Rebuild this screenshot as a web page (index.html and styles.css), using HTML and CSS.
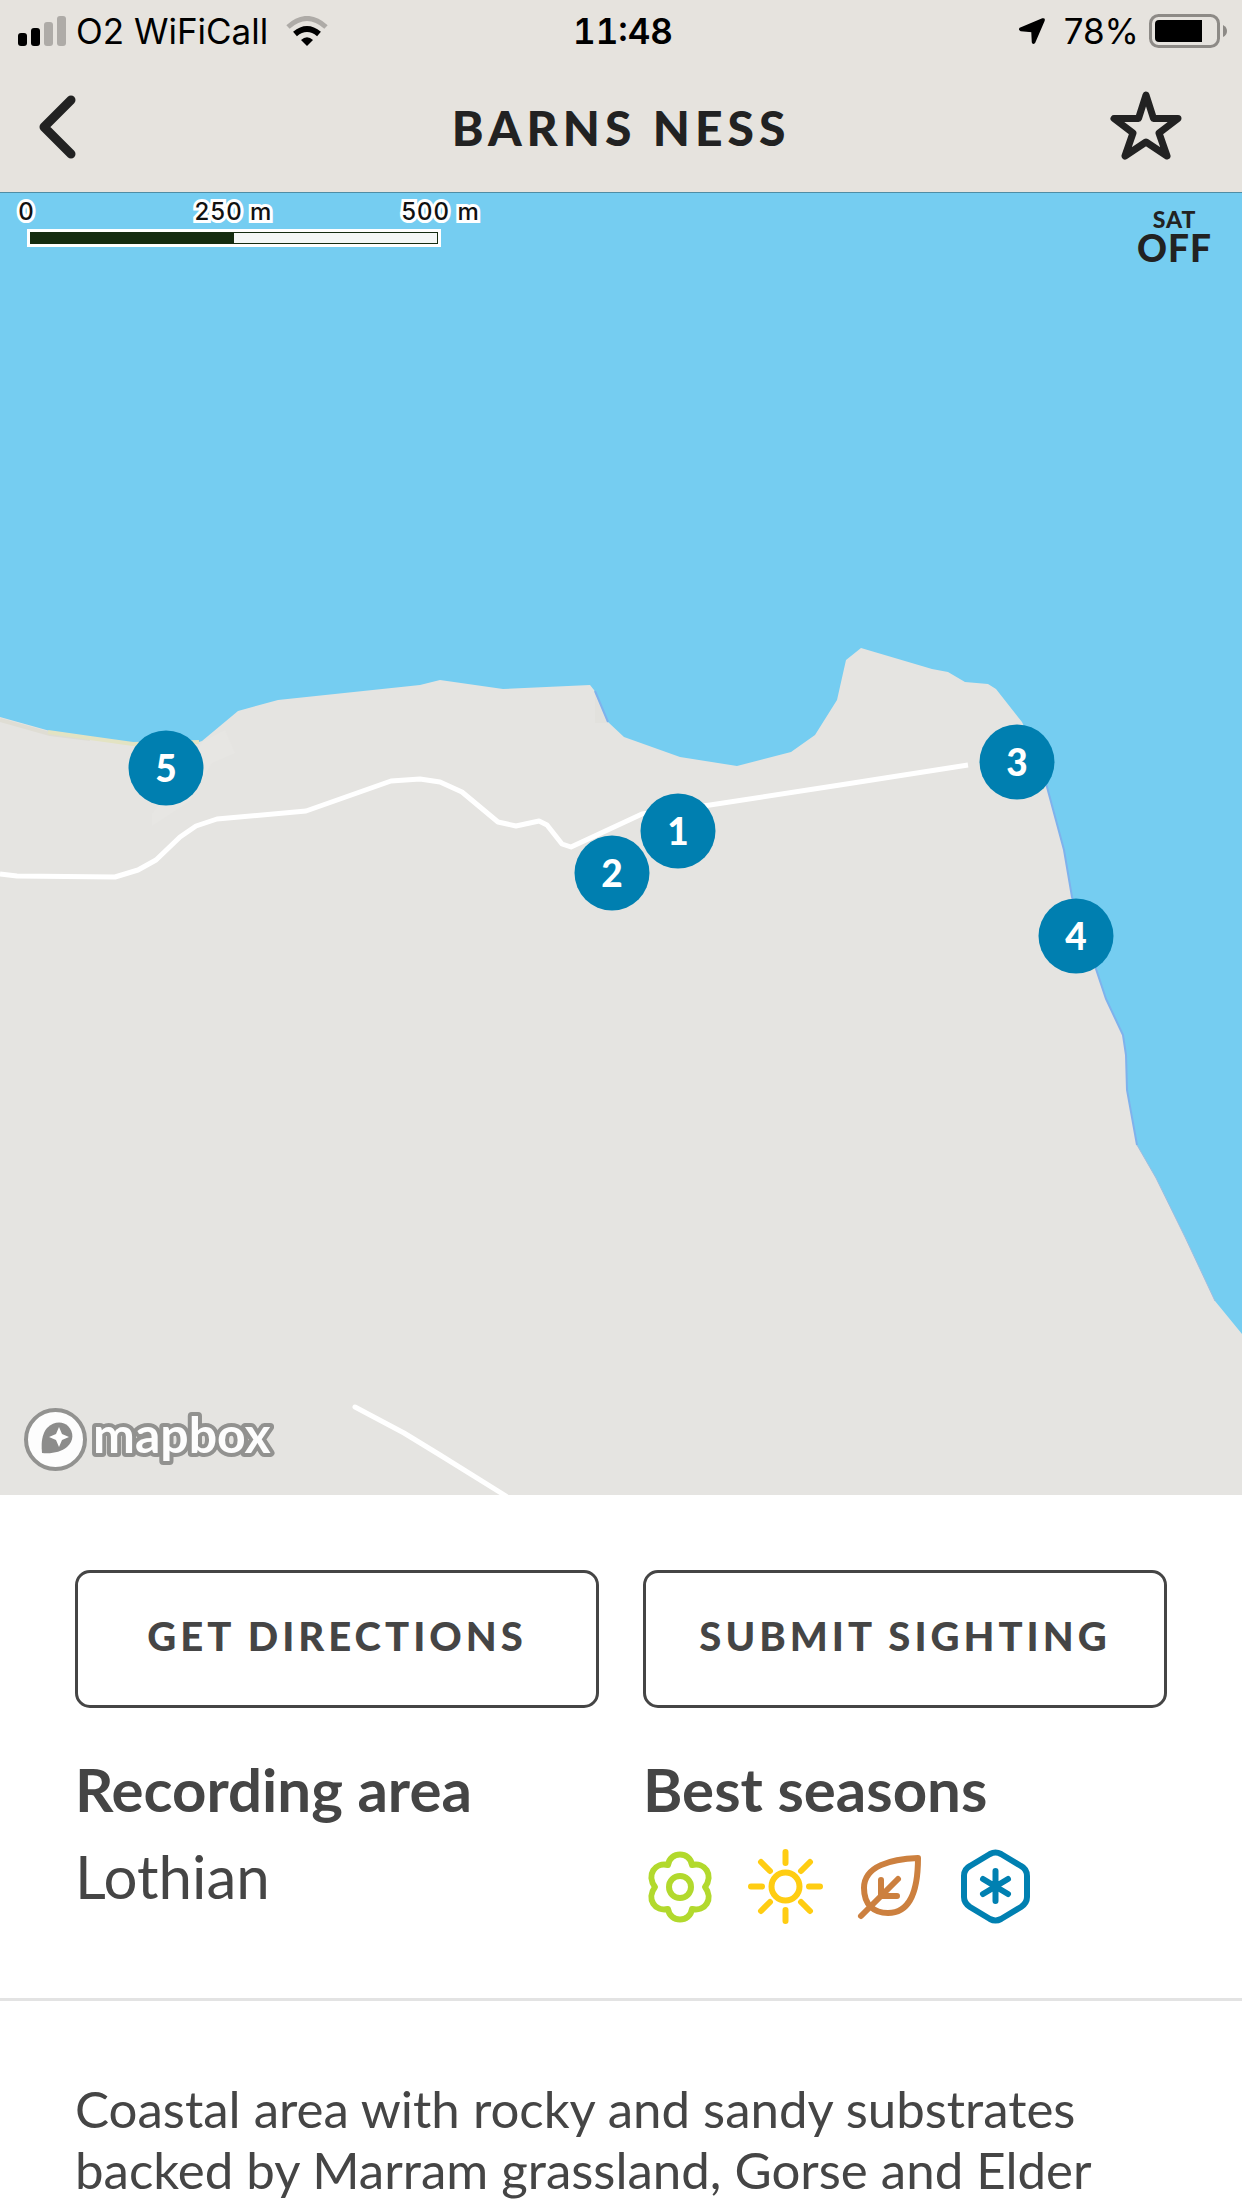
FILE: index.html
```html
<!DOCTYPE html>
<html lang="en">
<head>
  <meta charset="UTF-8">
  <meta name="viewport" content="width=device-width, initial-scale=1.0">
  <title>Barns Ness</title>
  <link rel="stylesheet" href="styles.css">
</head>
<body>
  <header class="top">
    <div class="status">
      <div class="status-left">
        <svg width="48" height="30" viewBox="0 0 48 30" aria-hidden="true">
          <rect x="0" y="17" width="9" height="13" rx="3"/>
          <rect x="13" y="12" width="9" height="18" rx="3"/>
          <rect x="26" y="6" width="9" height="24" rx="3" fill="#aeaba7"/>
          <rect x="39" y="0" width="9" height="30" rx="3" fill="#aeaba7"/>
        </svg>
        <span>O2 WiFiCall</span>
        <svg class="wifi" width="42" height="30" viewBox="0 0 42 30" fill="none" aria-hidden="true">
          <path d="M2 11Q21-6 40 11" stroke="#aeaba7" stroke-width="5"/>
          <path d="M9 18Q21 8 33 18" stroke="#000" stroke-width="6"/>
          <path d="M15 24Q21 18.500 27 24L21 30Z" fill="#000"/>
        </svg>
      </div>
      <span class="clock">11:48</span>
      <div class="status-right">
        <svg width="28" height="28" viewBox="0 0 28 28" aria-hidden="true">
          <path d="M2 11.500L24.500 2Q26.500 1.500 26 3.500L16.500 25.500Q15 27 14.500 25L14 14.500L3 13.500Q1 12.500 2 11.500Z" stroke="#000" stroke-width="1.500"/>
        </svg>
        <span class="percent">78%</span>
        <svg width="79" height="34" viewBox="0 0 79 34" aria-hidden="true">
          <rect x="1.500" y="1.500" width="68" height="31" rx="8" fill="none" stroke="#8d8a86" stroke-width="3"/>
          <path d="M10 6H53V28H10Q6 28 6 24V10Q6 6 10 6Z"/>
          <path d="M74 11Q78 13 78 17Q78 21 74 23Z" fill="#8d8a86"/>
        </svg>
      </div>
    </div>
    <nav class="nav">
      <button type="button" class="back" aria-label="Back">
        <svg width="72" height="72" viewBox="0 0 72 72">
          <path d="M48 9L21 36L48 63" fill="none" stroke="#222" stroke-width="9" stroke-linecap="round" stroke-linejoin="round"/>
        </svg>
      </button>
      <h1>BARNS NESS</h1>
      <button type="button" class="favourite" aria-label="Favourite">
        <svg width="72" height="72" viewBox="0 0 72 72">
          <path d="M36 4L43.500 27.500H68L49 42L57 65L36 51L15 65L23 42L4 27.500H28.500Z" fill="none" stroke="#222" stroke-width="7" stroke-linejoin="round"/>
        </svg>
      </button>
    </nav>
  </header>

  <main>
    <section class="map" aria-label="Map">
      <svg class="map-drawing" viewBox="0 0 1242 1302" aria-hidden="true">
        <rect width="1242" height="1302" fill="#75cdf1"/>
        <!-- land -->
        <path fill="#e5e4e1" d="M0 524L50 538L133 550L190 552L202 548L238 518L278 507L420 492L440 487L503 496L590 492L594 497L608 529L624 544L680 564L737 573L791 559L815 542L837 507L846 467L861 455L932 476L948 479L965 489L988 491L996 496L1022 529L1033 553L1047 594L1064 657L1072 704L1096 776L1106 806L1123 842L1126 862L1127 897L1137 952L1156 985L1185 1044L1215 1108L1242 1141V1302H0Z"/>
        <path fill="#e2e1dd" d="M595 502L607 530H595Z"/>
        <path fill="#e7e6e3" d="M202 549L225 537L235 560L212 570L190 608L152 633V621Z"/>
        <!-- beach and shoreline -->
        <path fill="none" stroke="#dfddd4" stroke-width="4" d="M0 527L50 541L90 546"/>
        <path fill="none" stroke="#e3e3c3" stroke-width="4" d="M48 539L90 545L133 551L199 549"/>
        <path fill="none" stroke="#7fb2ec" stroke-width="2" d="M595 498L608 529M1033 553L1047 594L1064 657L1072 704L1096 776L1106 806L1123 842L1126 862L1127 897L1137 952"/>
        <path fill="none" stroke="#9cbde0" stroke-width="1" d="M1137 952L1156 985L1185 1044L1215 1108"/>
        <!-- roads -->
        <g fill="none" stroke="#fff" stroke-width="5" stroke-linejoin="round">
          <path d="M0 681L17 683L115 684L138 677L156 667L180 644L196 633L217 626L306 618L391 588L420 586L440 589L462 599L498 629L516 633L539 628L547 632L562 651L571 654L642 621L710 612L840 592L968 572"/>
          <path d="M355 1214L404 1240L440 1262L506 1303" stroke-linecap="round"/>
        </g>
      </svg>

      <div class="scale">
        <div class="scale-labels"><span>0</span><span>250 m</span><span>500 m</span></div>
        <div class="scale-bar"></div>
      </div>

      <button type="button" class="satellite"><span>SAT</span><strong>OFF</strong></button>

      <button type="button" class="marker" style="--x: 166; --y: 575">5</button>
      <button type="button" class="marker" style="--x: 678; --y: 638">1</button>
      <button type="button" class="marker" style="--x: 612; --y: 680">2</button>
      <button type="button" class="marker" style="--x: 1017; --y: 569">3</button>
      <button type="button" class="marker" style="--x: 1076; --y: 743">4</button>

      <a class="mapbox" href="#" aria-label="mapbox">
        <svg width="270" height="72" viewBox="0 0 270 72">
          <circle cx="31.500" cy="31.500" r="29.500" fill="#fdfdfd" stroke="#929290" stroke-width="4"/>
          <path d="M18 45C17 34 18 26 23 20C30 13 39 13 44 18C50 24 50 33 43 39C37 44 28 46 18 45Z" fill="#8c8c8b"/>
          <path d="M35 19L38 26L45 29L38 32L35 39L32 32L25 29L32 26Z" fill="#fff"/>
          <text class="mapbox-name" x="69" y="45">mapbox</text>
        </svg>
      </a>
    </section>

    <section class="details">
      <div class="column">
        <button type="button" class="action">GET DIRECTIONS</button>
        <h2>Recording area</h2>
        <p>Lothian</p>
      </div>
      <div class="column">
        <button type="button" class="action">SUBMIT SIGHTING</button>
        <h2>Best seasons</h2>
        <div class="seasons">
          <svg viewBox="0 0 75 75" stroke="#b2d92d" role="img" aria-label="Spring">
            <circle cx="37" cy="38" r="11"/>
            <path d="M25 16C27 2 47 2 49 16C62 13 71 26 62 38C71 50 62 63 49 60C47 74 27 74 25 60C12 63 3 50 12 38C3 26 12 13 25 16Z"/>
          </svg>
          <svg viewBox="0 0 75 75" stroke="#ffcd12" role="img" aria-label="Summer">
            <circle cx="37.500" cy="37.500" r="14"/>
            <path d="M37.500 3V14M37.500 61V72M3 37.500H14M61 37.500H72M13 13L22 22M53 53L62 62M62 13L53 22M22 53L13 62"/>
          </svg>
          <svg viewBox="0 0 75 75" stroke="#cc803f" role="img" aria-label="Autumn">
            <path d="M65 9C38 10 11 17 11 39C11 56 21 64 35 64C62 64 65 31 65 9Z"/>
            <path d="M8 67L45 30M28 31V47H44"/>
          </svg>
          <svg viewBox="0 0 75 75" stroke="#0080b1" role="img" aria-label="Winter">
            <path d="M32 5Q37.500 2 43 5L63 17Q69 20 69 27V48Q69 54 63 58L43 70Q37.500 73 32 70L12 58Q6 54 6 48V27Q6 20 12 17Z"/>
            <path d="M37.500 22V52M25 30L50 45M50 30L25 45"/>
          </svg>
        </div>
      </div>
    </section>

    <section class="description">
      <p>Coastal area with rocky and sandy substrates backed by Marram grassland, Gorse and Elder</p>
    </section>
  </main>
</body>
</html>
```
FILE: styles.css
```css
* {
  box-sizing: border-box;
}

body {
  margin: 0;
  background-color: #ffffff;
  font-family: Lato, sans-serif;
  color: #454545;
}

h1, h2, p {
  margin: 0;
}

button {
  padding: 0;
  border: 0;
  background: none;
  font-family: inherit;
  color: inherit;
}

svg {
  display: block;
}

.top {
  background-color: #e6e3de;
  border-bottom: 1px solid #4f8da5;
}

.status {
  display: grid;
  grid-template-columns: 1fr auto 1fr;
  align-items: center;
  height: 62px;
  padding: 0 14px 0 18px;
  font-family: Inter, sans-serif;
  font-size: 35px;
  line-height: 62px;
  color: #000000;
}

.status-left, .status-right {
  display: flex;
  align-items: center;
  gap: 10px;
}

.status-right {
  justify-content: flex-end;
}

.wifi {
  margin-left: 8px;
}

.clock {
  font-weight: 600;
  font-variant-numeric: tabular-nums;
}

.percent {
  margin-left: 8px;
}

.nav {
  display: grid;
  grid-template-columns: 1fr auto 1fr;
  align-items: center;
  height: 130px;
}

.back {
  justify-self: start;
  margin-left: 23px;
}

.favourite {
  justify-self: end;
  margin-right: 60px;
}

h1 {
  font-size: 48px;
  font-weight: 900;
  letter-spacing: 5px;
  color: #222222;
}

.map {
  position: relative;
}

.map-drawing {
  width: 100%;
}

.scale {
  position: absolute;
  top: 7px;
  left: 27px;
  width: 414px;
}

/* each label is centred on its tick */
.scale-labels {
  display: grid;
  grid-template-columns: repeat(3, 207px);
  margin-left: -104px;
  font-family: Inter, sans-serif;
  font-size: 24px;
  font-weight: 500;
  line-height: 24px;
  letter-spacing: 1px;
  text-align: center;
  color: #111111;
  -webkit-text-stroke: 6px #ffffff;
  paint-order: stroke fill;
}

.scale-bar {
  height: 18px;
  margin-top: 5px;
  border: 3px solid #ffffff;
  outline: 1px solid #152c10;
  outline-offset: -4px;
  background: linear-gradient(to right, #152c10 50%, #f4f7f6 50%);
}

.satellite {
  position: absolute;
  top: 12px;
  right: 30px;
  display: flex;
  flex-direction: column;
  align-items: center;
  font-size: 23px;
  font-weight: 900;
  line-height: 28px;
  letter-spacing: 1px;
  color: #222222;
}

.satellite strong {
  font-size: 37px;
  font-weight: 900;
  line-height: 30px;
}

.marker {
  position: absolute;
  left: calc(var(--x) / 1242 * 100%);
  top: calc(var(--y) / 1302 * 100%);
  width: 75px;
  height: 75px;
  padding-bottom: 2px;
  border-radius: 50%;
  transform: translate(-50%, -50%);
  background-color: #007fb0;
  font-size: 37px;
  font-weight: 900;
  color: #ffffff;
}

.mapbox {
  position: absolute;
  left: 24px;
  bottom: 15px;
}

.mapbox-name {
  font-size: 50px;
  font-weight: 700;
  fill: #fdfdfd;
  stroke: #929290;
  stroke-width: 8px;
  stroke-linejoin: round;
  paint-order: stroke fill;
}

.details {
  display: grid;
  grid-template-columns: 1fr 1fr;
  gap: 44px;
  padding: 75px 75px 74px;
  border-bottom: 3px solid #e3e3e3;
}

.action {
  width: 100%;
  height: 138px;
  padding-bottom: 6px;
  border: 3px solid #454545;
  border-radius: 15px;
  font-size: 40px;
  font-weight: 900;
  letter-spacing: 4px;
}

h2, .column p {
  font-size: 60px;
  line-height: 72px;
}

h2 {
  margin: 45px 0 15px;
}

.seasons {
  display: flex;
  gap: 30px;
  padding-top: 9px;
}

.seasons svg {
  width: 75px;
  height: 75px;
  fill: none;
  stroke-width: 6;
  stroke-linecap: round;
  stroke-linejoin: round;
}

.description {
  padding: 77px 75px;
  font-size: 51px;
  line-height: 61px;
}
```
